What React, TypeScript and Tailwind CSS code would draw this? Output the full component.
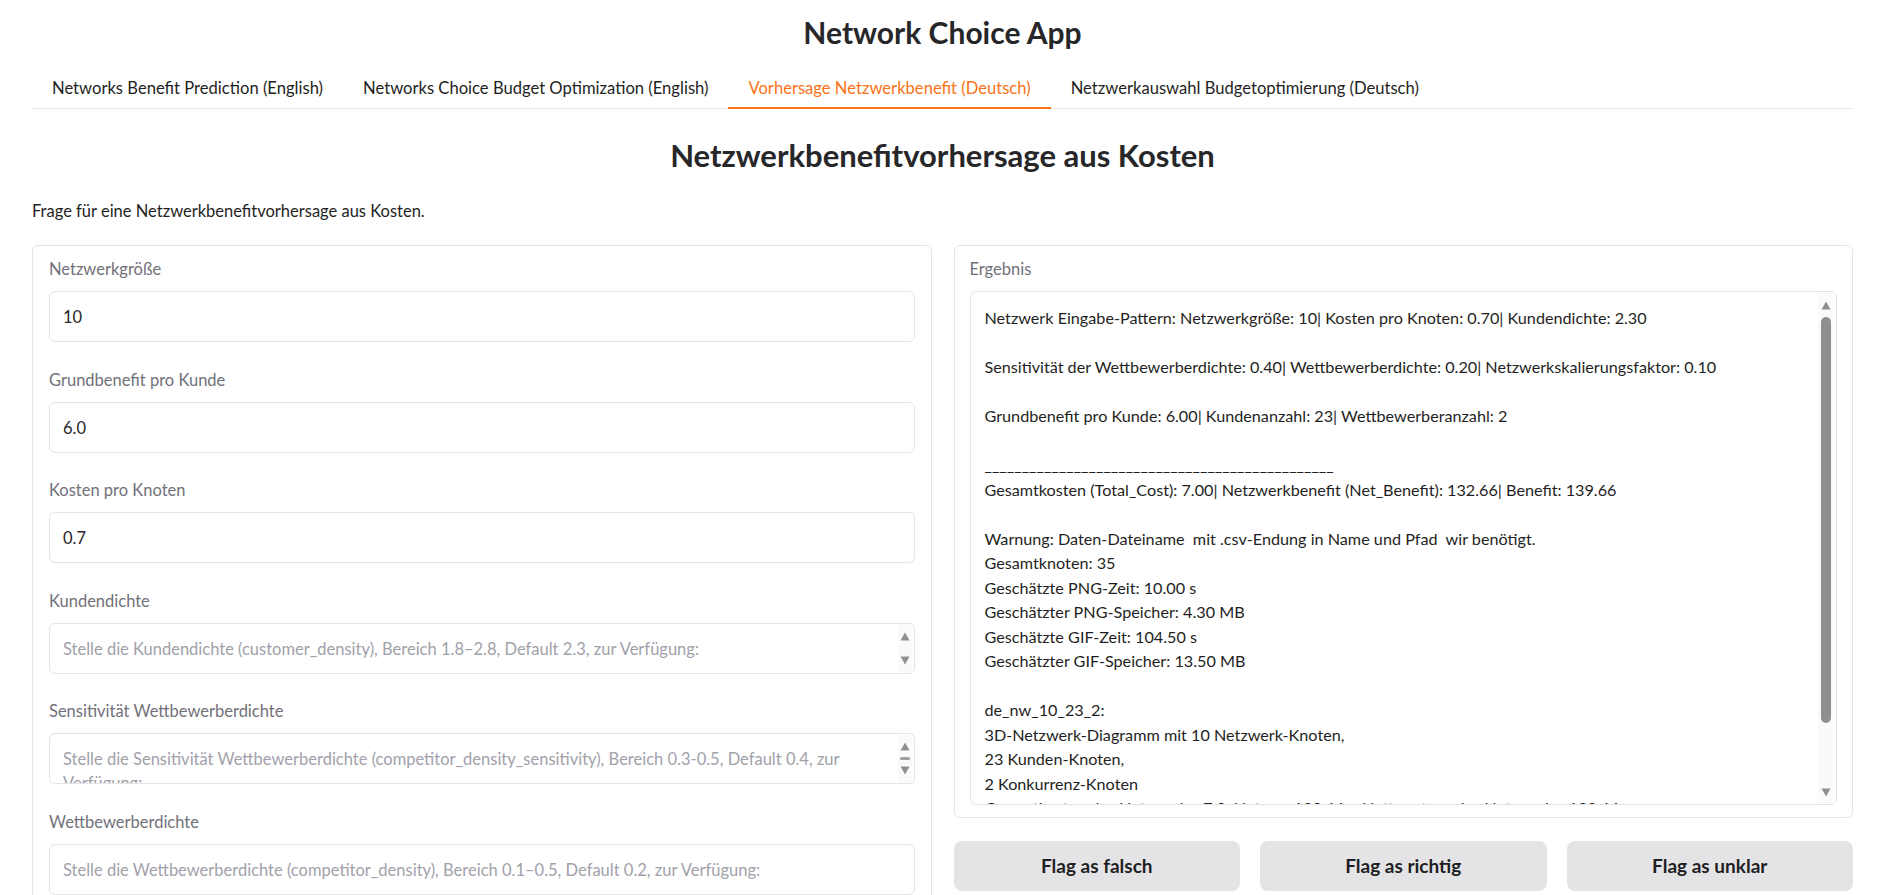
import { useState } from 'react'

const FONT = { fontFamily: 'Lato, "Noto Sans", sans-serif' }

const tabs = [
  'Networks Benefit Prediction (English)',
  'Networks Choice Budget Optimization (English)',
  'Vorhersage Netzwerkbenefit (Deutsch)',
  'Netzwerkauswahl Budgetoptimierung (Deutsch)',
]

const result = [
  'Netzwerk Eingabe-Pattern: Netzwerkgröße: 10| Kosten pro Knoten: 0.70| Kundendichte: 2.30',
  '',
  'Sensitivität der Wettbewerberdichte: 0.40| Wettbewerberdichte: 0.20| Netzwerkskalierungsfaktor: 0.10',
  '',
  'Grundbenefit pro Kunde: 6.00| Kundenanzahl: 23| Wettbewerberanzahl: 2',
  '',
  '_______________________________________________',
  'Gesamtkosten (Total_Cost): 7.00| Netzwerkbenefit (Net_Benefit): 132.66| Benefit: 139.66',
  '',
  'Warnung: Daten-Dateiname  mit .csv-Endung in Name und Pfad  wir benötigt.',
  'Gesamtknoten: 35',
  'Geschätzte PNG-Zeit: 10.00 s',
  'Geschätzter PNG-Speicher: 4.30 MB',
  'Geschätzte GIF-Zeit: 104.50 s',
  'Geschätzter GIF-Speicher: 13.50 MB',
  '',
  'de_nw_10_23_2:',
  '3D-Netzwerk-Diagramm mit 10 Netzwerk-Knoten,',
  '23 Kunden-Knoten,',
  '2 Konkurrenz-Knoten',
  'Gesamtkosten des Netzwerks: 7.0, Nutzen: 139.66 > Nettonutzen des Netzwerks: 132.66',
]

function Arrow({ up, className }: { up?: boolean; className?: string }) {
  return (
    <svg width="10" height="9" viewBox="0 0 10 9" className={className}>
      {up ? <path d="M5 0.5 L9.5 8.5 L0.5 8.5 Z" fill="currentColor" /> : <path d="M0.5 0.5 L9.5 0.5 L5 8.5 Z" fill="currentColor" />}
    </svg>
  )
}

function Field({ label, value, placeholder, children, scroll }: { label: string; value?: string; placeholder?: string; children?: React.ReactNode; scroll?: 'arrows' | 'thumb' }) {
  return (
    <div className="flex flex-col">
      <span className="text-[16.5px] leading-[24px] text-[#71717a]">{label}</span>
      <div className="relative mt-[10px] h-[51px] overflow-hidden rounded-[6px] border border-[#e4e4e7] bg-white pl-[13px] pr-[40px] pt-[13px]">
        {value && <div className="text-[16.5px] leading-[24px] text-[#27272a]">{value}</div>}
        {placeholder && <div className="whitespace-nowrap text-[16.5px] leading-[24px] text-[#a1a1aa]">{placeholder}</div>}
        {children}
        {scroll && (
          <div className="absolute right-[2px] top-px bottom-px flex w-[14px] flex-col items-center justify-between bg-[#fafafa] py-[7px] text-[#8f8f8f]">
            <Arrow up />
            {scroll === 'thumb' && <div className="h-[3px] w-[10px] rounded-full bg-[#a0a0a0]" />}
            <Arrow />
          </div>
        )}
      </div>
    </div>
  )
}

export default function App() {
  const [active, setActive] = useState(2)

  return (
    <div className="min-h-screen bg-white pl-[32px] pr-[42px] pt-[13px] text-[#27272a]" style={FONT}>
      <h1 className="text-center text-[30px] font-bold leading-[38px] text-[#27272a]">Network Choice App</h1>

      {/* Tabs */}
      <div className="mt-[18px] flex border-b border-[#e4e4e7]">
        {tabs.map((t, i) => (
          <button
            key={t}
            onClick={() => setActive(i)}
            className={`-mb-px h-[40px] px-[20px] text-[16.6px] leading-[24px] ${
              i === active ? 'border-b-2 border-[#f97316] text-[#f97316]' : 'border-b-2 border-transparent text-[#1f1f23]'
            }`}
          >
            {t}
          </button>
        ))}
      </div>

      <h2 className="mt-[27px] text-center text-[31px] font-bold leading-[38px] text-[#27272a]">Netzwerkbenefitvorhersage aus Kosten</h2>
      <p className="mt-[25px] text-[16.5px] leading-[24px] text-[#1f1f23]">Frage für eine Netzwerkbenefitvorhersage aus Kosten.</p>

      <div className="mt-[22px] grid grid-cols-2 items-start gap-[22px]">
        {/* Inputs */}
        <div className="flex h-[680px] flex-col gap-[25.5px] rounded-[6px] border border-[#e4e4e7] px-[16px] pt-[11px]">
          <Field label="Netzwerkgröße" value="10" />
          <Field label="Grundbenefit pro Kunde" value="6.0" />
          <Field label="Kosten pro Knoten" value="0.7" />
          <Field label="Kundendichte" placeholder="Stelle die Kundendichte (customer_density), Bereich 1.8–2.8, Default 2.3, zur Verfügung:" scroll="arrows" />
          <Field label="Sensitivität Wettbewerberdichte" scroll="thumb">
            <div className="whitespace-nowrap text-[16.5px] leading-[24px] text-[#a1a1aa]">
              Stelle die Sensitivität Wettbewerberdichte (competitor_density_sensitivity), Bereich 0.3-0.5, Default 0.4, zur
              <br />
              Verfügung:
            </div>
          </Field>
          <Field label="Wettbewerberdichte" placeholder="Stelle die Wettbewerberdichte (competitor_density), Bereich 0.1–0.5, Default 0.2, zur Verfügung:" />
        </div>

        {/* Result */}
        <div className="flex flex-col gap-[23px]">
          <div className="flex flex-col rounded-[6px] border border-[#e4e4e7] px-[15px] pb-[12px] pt-[11px]">
            <span className="text-[16.5px] leading-[24px] text-[#71717a]">Ergebnis</span>
            <div className="relative mt-[10px] h-[514px] overflow-hidden rounded-[6px] border border-[#e4e4e7] pl-[14px] pr-[30px] pt-[14px]">
              {result.map((line, i) => (
                <div key={i} className="h-[24.5px] whitespace-pre text-[16.2px] leading-[24.5px] text-[#1f1f23]">
                  {line}
                </div>
              ))}
              <div className="absolute right-[3px] top-px bottom-px flex w-[15px] flex-col items-center bg-[#fafafa] pt-[8px] text-[#8f8f8f]">
                <Arrow up />
                <div className="mt-[7px] h-[406px] w-[10px] rounded-full bg-[#8f8f8f]" />
                <div className="flex-1" />
                <Arrow className="mb-[6px]" />
              </div>
            </div>
          </div>

          <div className="grid grid-cols-3 gap-[20px]">
            {['Flag as falsch', 'Flag as richtig', 'Flag as unklar'].map((b) => (
              <button key={b} className="h-[50px] rounded-[8px] bg-[#e4e4e7] text-[19px] font-bold text-[#1f1f23]">
                {b}
              </button>
            ))}
          </div>
        </div>
      </div>
    </div>
  )
}
